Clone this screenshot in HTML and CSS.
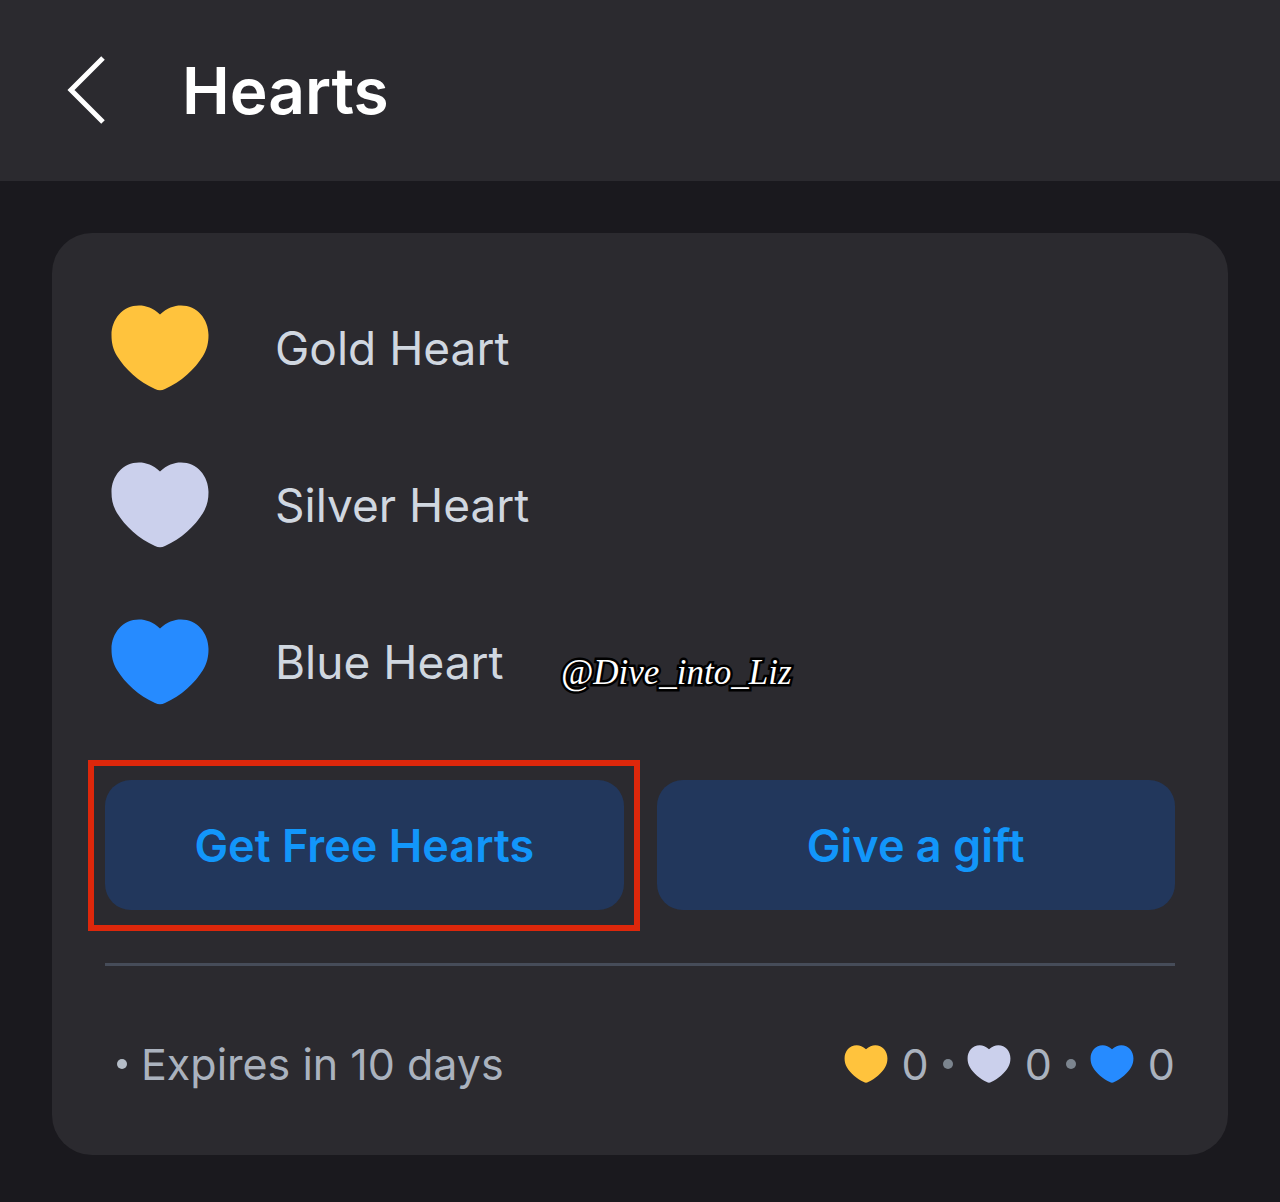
FILE: index.html
```
<!DOCTYPE html>
<html lang="en">
<head>
    <meta charset="UTF-8">
    <meta name="viewport" content="width=device-width, initial-scale=1.0">
    <title>Hearts</title>
    <link rel="stylesheet" href="styles.css">
</head>
<body>
    <svg class="defs" aria-hidden="true">
        <symbol id="heart" viewBox="0 0 98 86">
            <path d="M49 9.500C56 3 63 0.500 70 0.500C86 0.500 97.500 14 97.500 30C97.500 38 96 44 92 51C84 64 70 77 54 84Q49 86.500 44 84C28 77 14 64 6 51C2 44 0.500 38 0.500 30C0.500 14 12 0.500 28 0.500C35 0.500 42 3 49 9.500Z"/>
        </symbol>
    </svg>

    <header class="header">
        <button class="back" aria-label="Back">
            <svg viewBox="0 0 40 68"><path d="M37 1L5 33L37 65"/></svg>
        </button>
        <h1>Hearts</h1>
    </header>

    <main class="content">
        <section class="card">
            <ul class="heart-list">
                <li><svg class="heart gold"><use href="#heart"/></svg><span>Gold Heart</span></li>
                <li><svg class="heart silver"><use href="#heart"/></svg><span>Silver Heart</span></li>
                <li>
                    <svg class="heart blue"><use href="#heart"/></svg><span>Blue Heart</span>
                    <span class="watermark">@Dive_into_Liz</span>
                </li>
            </ul>

            <div class="actions">
                <div class="action highlight"><button>Get Free Hearts</button></div>
                <div class="action"><button>Give a gift</button></div>
            </div>

            <div class="summary">
                <div class="expires"><i class="dot"></i>Expires in 10 days</div>
                <div class="counts">
                    <svg class="heart gold"><use href="#heart"/></svg><span>0</span>
                    <i class="dot"></i>
                    <svg class="heart silver"><use href="#heart"/></svg><span>0</span>
                    <i class="dot"></i>
                    <svg class="heart blue"><use href="#heart"/></svg><span>0</span>
                </div>
            </div>
        </section>
    </main>
</body>
</html>
```
FILE: styles.css
```
* {
    box-sizing: border-box;
}
body {
    margin: 0;
    font-family: Inter, "Liberation Sans", sans-serif;
    background-color: #1a191e;
    color: #d0d7e0;
}
.defs {
    display: none;
}
button {
    border: none;
    padding: 0;
    font-family: inherit;
    cursor: pointer;
}
.header {
    display: flex;
    align-items: center;
    gap: 76px;
    height: 181px;
    padding: 0 66px;
    background-color: #2b2a2f;
}
.header h1 {
    margin: 0;
    font-size: 64px;
    font-weight: 600;
    color: #fff;
}
.back {
    width: 40px;
    height: 70px;
    background: none;
}
.back svg {
    display: block;
    width: 40px;
    height: 68px;
    overflow: visible;
    fill: none;
    stroke: #fff;
    stroke-width: 5;
}
.content {
    padding: 52px;
}
.card {
    padding: 36px 53px 41px;
    border-radius: 40px;
    background-color: #2b2a2f;
}
.heart-list {
    list-style: none;
    margin: 0;
    padding: 0 6px;
    font-size: 46px;
}
.heart-list li {
    position: relative;
    display: flex;
    align-items: center;
    gap: 66px;
    height: 157px;
}
.heart {
    width: 98px;
    height: 86px;
    flex: none;
}
.gold {
    fill: #ffc33d;
}
.silver {
    fill: #cbd0ec;
}
.blue {
    fill: #268bff;
}
.watermark {
    position: absolute;
    left: 450px;
    top: 70px;
    font-family: "Liberation Serif", serif;
    font-style: italic;
    font-size: 35px;
    line-height: 40px;
    color: #fff;
    -webkit-text-stroke: 5px #000;
    paint-order: stroke fill;
}
.actions {
    display: flex;
    gap: 33px;
    margin-top: 40px;
    padding-bottom: 53px;
    border-bottom: 3px solid #464c59;
}
.action {
    position: relative;
    flex: 1;
}
.action button {
    display: block;
    width: 100%;
    height: 130px;
    border-radius: 26px;
    background-color: #22375c;
    color: #1296fa;
    font-size: 45px;
    font-weight: 600;
}
.highlight::after {
    content: "";
    position: absolute;
    inset: -20px -16px -21px -17px;
    border: 6px solid #dd270b;
    pointer-events: none;
}
.summary {
    display: flex;
    justify-content: space-between;
    align-items: center;
    margin-top: 48px;
    line-height: 100px;
    font-size: 43px;
    color: #aab2be;
}
.expires, .counts {
    display: flex;
    align-items: center;
}
.expires {
    gap: 14px;
    padding-left: 12px;
}
.dot {
    width: 10px;
    height: 10px;
    border-radius: 50%;
    background-color: #b5bdc8;
}
.counts {
    gap: 14px;
}
.counts .heart {
    width: 44px;
    height: 38px;
}
.counts .dot {
    background-color: #7c858f;
}
```
